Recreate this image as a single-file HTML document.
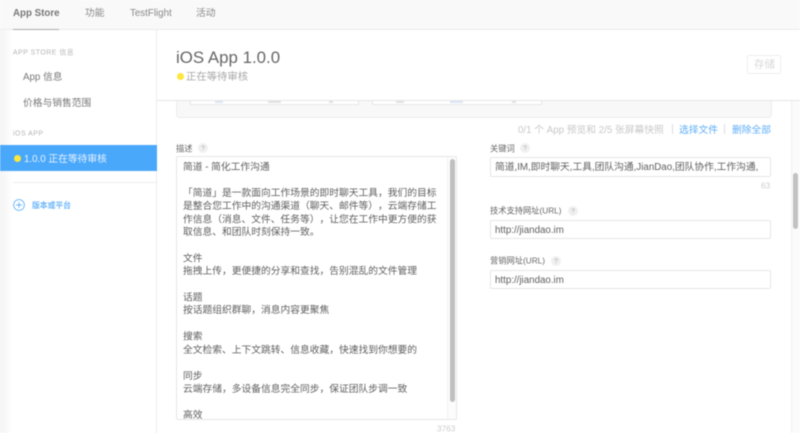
<!DOCTYPE html>
<html lang="zh">
<head>
<meta charset="utf-8">
<style>
html,body{margin:0;padding:0;width:800px;height:433px;overflow:hidden;background:#fff}
body{font-family:"Liberation Sans","Noto Sans CJK SC",sans-serif;color:#444;position:relative;text-spacing-trim:space-all}
#w{position:absolute;left:0;top:0;width:800px;height:433px;overflow:hidden;filter:blur(.4px)}
.a{position:absolute;white-space:nowrap}
.t{position:absolute;white-space:nowrap;transform:scale(.75);transform-origin:0 0;font-size:13px;line-height:18.67px;margin-top:1.5px}
.q{position:absolute;width:10px;height:10px;border-radius:50%;background:#f0f0f0}
.q span{position:absolute;left:0;top:0;width:13.33px;height:13.33px;transform:scale(.75);transform-origin:0 0;font-size:9px;line-height:13.33px;text-align:center;color:#aaa}
.inp{position:absolute;left:490px;width:279px;height:18px;border:1px solid #e6e6e6;border-radius:2px;background:#fff}
.lab{font-size:11px;color:#666;line-height:16px}
.sm{font-size:9.2px;color:#b4b4b4;letter-spacing:.7px;line-height:16px}
.cnt{font-size:11px;color:#ccc;line-height:16px}
</style>
</head>
<body>
<div id="w">
  <!-- top nav -->
  <div class="a" style="left:0;top:0;width:800px;height:29px;background:#f9f9f9;border-bottom:1px solid #ececec"></div>
  <div class="t" style="left:13px;top:4px;font-weight:bold;color:#777">App Store</div>
  <div class="a" style="left:13px;top:29px;width:46px;height:1.5px;background:#aaa"></div>
  <div class="t" style="left:85px;top:4px;color:#888">功能</div>
  <div class="t" style="left:130px;top:4px;color:#888">TestFlight</div>
  <div class="t" style="left:196px;top:4px;color:#888">活动</div>

  <!-- sidebar -->
  <div class="a" style="left:0;top:30px;width:156px;height:403px;background:#fff;border-right:1px solid #ececec"></div>
  <div class="a" style="left:0;top:30px;width:13px;height:403px;background:linear-gradient(to right,#f4f4f4,#fff)"></div>
  <div class="t sm" style="left:13px;top:44px">APP STORE 信息</div>
  <div class="t" style="left:23px;top:68.5px;color:#777">App 信息</div>
  <div class="t" style="left:23px;top:94px;color:#777">价格与销售范围</div>
  <div class="t sm" style="left:13px;top:125.5px">iOS APP</div>
  <div class="a" style="left:0;top:145px;width:157px;height:26px;background:#4aa8fb"></div>
  <div class="a" style="left:13.5px;top:154.5px;width:7px;height:7px;border-radius:50%;background:#fde73a"></div>
  <div class="t" style="left:24px;top:150px;color:#e6f2ff">1.0.0 正在等待审核</div>
  <div class="a" style="left:13px;top:182px;width:144px;height:1px;background:#ececec"></div>
  <svg class="a" style="left:13px;top:199px" width="12" height="12" viewBox="0 0 12 12"><circle cx="6" cy="6" r="5.4" fill="none" stroke="#6ab6f9" stroke-width=".9"/><path d="M6 3v6M3 6h6" stroke="#6ab6f9" stroke-width=".9" fill="none"/></svg>
  <div class="t" style="left:32px;top:199px;font-size:10.4px;line-height:14.67px;font-weight:bold;color:#6ab6f9">版本或平台</div>

  <!-- content header -->
  <div class="t" style="left:176px;top:46px;font-size:22.5px;line-height:26.67px;color:#666">iOS App 1.0.0</div>
  <div class="a" style="left:176.5px;top:72.5px;width:7px;height:7px;border-radius:50%;background:#fde73a"></div>
  <div class="t" style="left:186px;top:68px;font-size:13.8px;color:#a8a8a8">正在等待审核</div>
  <div class="a" style="left:747px;top:55px;width:32px;height:17px;border:1px solid #eee;border-radius:2px"></div>
  <div class="t" style="left:754px;top:55px;font-size:14px;color:#d8d8d8">存储</div>

  <!-- screenshots panel -->
  <div class="a" style="left:176px;top:100px;width:594px;height:17px;background:#f8f8f8;border:1px solid #ececec;border-top:0;border-radius:0 0 4px 4px"></div>
  <div class="a" style="left:190px;top:100px;width:167px;height:4px;background:#fff;border-bottom:1px solid #e6e6e6;border-left:1px solid #e6e6e6;border-right:1px solid #e6e6e6"></div>
  <div class="a" style="left:372px;top:100px;width:168px;height:4px;background:#fff;border-bottom:1px solid #e6e6e6;border-left:1px solid #e6e6e6;border-right:1px solid #e6e6e6"></div>
  <div class="a" style="left:215px;top:101px;width:8px;height:2px;background:#dbe6f5"></div>
  <div class="a" style="left:268px;top:101px;width:13px;height:2px;background:#e2e2e2"></div>
  <div class="a" style="left:329px;top:101px;width:4px;height:2px;background:#e2e2e2"></div>
  <div class="a" style="left:396px;top:101px;width:8px;height:2px;background:#e2e2e2"></div>
  <div class="a" style="left:450px;top:101px;width:13px;height:2px;background:#dbe6f5"></div>
  <div class="a" style="left:512px;top:101px;width:4px;height:2px;background:#e2e2e2"></div>
  <!-- header border -->
  <div class="a" style="left:157px;top:100px;width:643px;height:1px;background:#e6e6e6"></div>

  <!-- scrollbar -->
  <div class="a" style="left:791px;top:101px;width:9px;height:332px;background:#fbfbfb;border-left:1px solid #f0f0f0;box-sizing:border-box"></div>
  <div class="a" style="left:793px;top:173px;width:5px;height:56px;border-radius:3px;background:#c2c2c2"></div>

  <!-- counter row -->
  <div class="t" style="left:518px;top:121px;color:#c8c8c8">0/1 个 App 预览和 2/5 张屏幕快照</div>
  <div class="a" style="left:672px;top:124px;width:1px;height:10px;background:#ddd"></div>
  <div class="t" style="left:679px;top:121px;color:#5cadf7">选择文件</div>
  <div class="a" style="left:724px;top:124px;width:1px;height:10px;background:#ddd"></div>
  <div class="t" style="left:732px;top:121px;color:#5cadf7">删除全部</div>

  <!-- description -->
  <div class="t lab" style="left:176px;top:141px">描述</div>
  <div class="q" style="left:198px;top:143px"><span>?</span></div>
  <div class="a" style="left:176px;top:156px;width:279px;height:262px;border:1px solid #e6e6e6;border-radius:2px;background:#fff;overflow:hidden">
    <div class="t" style="left:6px;top:1.3px;line-height:17.4px;color:#5e5e5e;white-space:pre">简道 - 简化工作沟通

「简道」是一款面向工作场景的即时聊天工具，我们的目标
是整合您工作中的沟通渠道（聊天、邮件等），云端存储工
作信息（消息、文件、任务等），让您在工作中更方便的获
取信息、和团队时刻保持一致。

文件
拖拽上传，更便捷的分享和查找，告别混乱的文件管理

话题
按话题组织群聊，消息内容更聚焦

搜索
全文检索、上下文跳转、信息收藏，快速找到你想要的

同步
云端存储，多设备信息完全同步，保证团队步调一致

高效</div>
    <div style="position:absolute;left:270px;top:0;width:9px;height:262px;background:#fcfcfc;border-left:1px solid #f3f3f3;box-sizing:border-box"></div>
    <div style="position:absolute;left:273px;top:2px;width:5px;height:243px;border-radius:3px;background:#c0c0c0"></div>
  </div>
  <div class="t cnt" style="left:437px;top:421px">3763</div>

  <!-- keywords -->
  <div class="t lab" style="left:490px;top:141px">关键词</div>
  <div class="q" style="left:520px;top:143px"><span>?</span></div>
  <div class="inp" style="top:157px"></div>
  <div class="t" style="left:495px;top:158px;color:#5e5e5e">简道,IM,即时聊天,工具,团队沟通,JianDao,团队协作,工作沟通,</div>
  <div class="t cnt" style="left:761px;top:178px">63</div>

  <div class="t lab" style="left:490px;top:203px">技术支持网址(URL)</div>
  <div class="q" style="left:568px;top:206px"><span>?</span></div>
  <div class="inp" style="top:220px;height:17px"></div>
  <div class="t" style="left:495px;top:221px;color:#5e5e5e">http://jiandao.im</div>

  <div class="t lab" style="left:490px;top:253px">营销网址(URL)</div>
  <div class="q" style="left:551px;top:256px"><span>?</span></div>
  <div class="inp" style="top:270px;height:17px"></div>
  <div class="t" style="left:495px;top:271px;color:#5e5e5e">http://jiandao.im</div>
</div>
</body>
</html>
